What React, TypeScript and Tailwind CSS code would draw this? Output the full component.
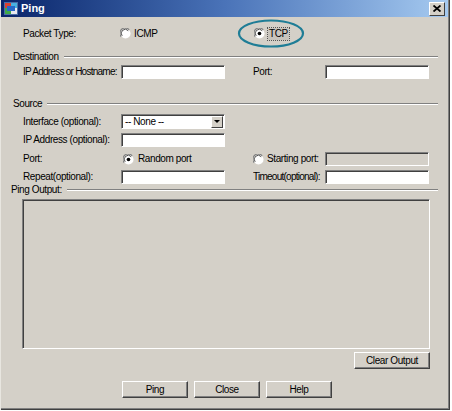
import React from "react";

const font = { fontFamily: '"Liberation Sans", Arial, sans-serif' };
const txt = "text-[10px] tracking-[-0.4px] whitespace-nowrap text-black leading-none";

function Radio({ checked }: { checked?: boolean }) {
  return (
    <svg width="11" height="11" viewBox="0 0 12 12" className="shrink-0">
      <circle cx="6" cy="6" r="5.5" fill="#ffffff" />
      <path d="M10 2 A5.5 5.5 0 0 0 1.2 9.5" fill="none" stroke="#808080" strokeWidth="1.2" />
      <path d="M9 3 A4.2 4.2 0 0 0 2.4 8.6" fill="none" stroke="#404040" strokeWidth="1" />
      {checked && <circle cx="6" cy="6" r="2" fill="#000000" />}
    </svg>
  );
}

function Input({ disabled }: { disabled?: boolean }) {
  return (
    <div
      className={
        "w-[104px] h-[14px] shrink-0 border border-t-[#808080] border-l-[#808080] border-b-white border-r-white shadow-[inset_1px_1px_0_#404040] " +
        (disabled ? "bg-[#d4d0c8]" : "bg-white")
      }
    />
  );
}

function Button({ label, w }: { label: string; w: string }) {
  return (
    <div
      className={
        w +
        " h-[17px] flex items-center justify-center bg-[#d4d0c8] border border-t-white border-l-white border-b-[#404040] border-r-[#404040] shadow-[inset_-1px_-1px_0_#808080] " +
        txt
      }
    >
      {label}
    </div>
  );
}

function GroupHeader({ label, pl }: { label: string; pl: string }) {
  return (
    <div className={"flex items-center h-[12px] pr-[12px] gap-[5px] " + pl}>
      <span className={txt}>{label}</span>
      <div className="flex-1 h-[2px] border-t border-t-[#808080] border-b border-b-white" />
    </div>
  );
}

function Label({ text, w, tight }: { text: string; w: string; tight?: boolean }) {
  return (
    <div className={w + " shrink-0 overflow-hidden " + txt + (tight ? " tracking-[-0.75px]" : "")}>
      {text}
    </div>
  );
}

export default function App() {
  return (
    <div className="w-[452px] h-[411px] bg-white" style={font}>
      <div className="relative w-[450px] h-[410px] bg-[#d4d0c8] border-l border-l-[#e8e6e0] shadow-[inset_-1px_-1px_0_#404040,inset_-2px_-2px_0_#808080] flex flex-col">
        {/* title bar */}
        <div className="h-[17px] mr-[2px] flex items-center bg-gradient-to-r from-[#0a246a] via-[#4a73b8] to-[#a6caf0] pl-[3px] pr-[3px]">
          <svg width="14" height="13" viewBox="0 0 14 13" className="shrink-0">
            <rect x="0" y="0" width="14" height="13" fill="#4a6ea8" />
            <rect x="1" y="1" width="6" height="5" fill="#d84030" />
            <rect x="7" y="1" width="6" height="5" fill="#48b0e0" />
            <rect x="1" y="6" width="6" height="6" fill="#40a848" />
            <rect x="7" y="6" width="6" height="6" fill="#e8e8f0" />
            <rect x="3" y="4" width="8" height="5" fill="#2868c8" />
          </svg>
          <span className="ml-[3px] text-[11px] font-bold text-white leading-none">Ping</span>
          <div className="ml-auto w-[16px] h-[14px] flex items-center justify-center bg-[#d4d0c8] border border-t-white border-l-white border-b-[#404040] border-r-[#404040]">
            <svg width="8" height="7" viewBox="0 0 8 7">
              <path d="M0.5 0.5 L7.5 6.5 M7.5 0.5 L0.5 6.5" stroke="#000" strokeWidth="1.8" />
            </svg>
          </div>
        </div>

        {/* packet type */}
        <div className="mt-[7px] h-[19px] flex items-center pl-[22px]">
          <Label text="Packet Type:" w="w-[97px]" />
          <div className="w-[134px] flex items-center gap-[3px]">
            <Radio />
            <span className={txt}>ICMP</span>
          </div>
          <div className="flex items-center gap-[3px]">
            <Radio checked />
            <span className={txt + " px-[1px] py-[1px] bg-[#c8c4bc] outline outline-1 outline-dotted outline-[#555]"}>TCP</span>
          </div>
        </div>

        {/* destination */}
        <div className="mt-[8px]">
          <GroupHeader label="Destination" pl="pl-[12px]" />
        </div>
        <div className="mt-[2px] h-[14px] flex items-center pl-[22px]">
          <Label text="IP Address or Hostname:" w="w-[98px]" tight />
          <Input />
          <div className="w-[28px] shrink-0" />
          <Label text="Port:" w="w-[72px]" />
          <Input />
        </div>

        {/* source */}
        <div className="mt-[19px]">
          <GroupHeader label="Source" pl="pl-[12px]" />
        </div>
        <div className="mt-[4px] h-[15px] flex items-center pl-[22px]">
          <Label text="Interface (optional):" w="w-[98px]" />
          <div className="w-[104px] h-[15px] flex items-center bg-white border border-t-[#808080] border-l-[#808080] border-b-white border-r-white shadow-[inset_1px_1px_0_#404040]">
            <span className={"flex-1 pl-[3px] " + txt}>-- None --</span>
            <div className="w-[12px] h-[12px] mr-[1px] flex items-center justify-center bg-[#d4d0c8] border border-t-white border-l-white border-b-[#404040] border-r-[#404040]">
              <svg width="6" height="4" viewBox="0 0 6 4">
                <path d="M0 0 L6 0 L3 3 Z" fill="#000" />
              </svg>
            </div>
          </div>
        </div>
        <div className="mt-[4px] h-[14px] flex items-center pl-[22px]">
          <Label text="IP Address (optional):" w="w-[98px]" />
          <Input />
        </div>
        <div className="mt-[5px] h-[14px] flex items-center pl-[22px]">
          <Label text="Port:" w="w-[98px]" />
          <div className="w-[132px] shrink-0 flex items-center gap-[4px] pl-[2px]">
            <Radio checked />
            <span className={txt}>Random port</span>
          </div>
          <div className="w-[72px] shrink-0 flex items-center gap-[3px]">
            <Radio />
            <span className={txt}>Starting port:</span>
          </div>
          <Input disabled />
        </div>
        <div className="mt-[4px] h-[14px] flex items-center pl-[22px]">
          <Label text="Repeat(optional):" w="w-[98px]" />
          <Input />
          <div className="w-[28px] shrink-0" />
          <Label text="Timeout(optional):" w="w-[72px]" tight />
          <Input />
        </div>

        {/* ping output */}
        <GroupHeader label="Ping Output:" pl="pl-[10px]" />
        <div className="mt-[3px] ml-[21px] w-[408px] h-[150px] border border-t-[#808080] border-l-[#808080] border-b-white border-r-white shadow-[inset_1px_1px_0_#404040] bg-[#d4d0c8]" />
        <div className="mt-[3px] flex pl-[353px]">
          <Button label="Clear Output" w="w-[76px]" />
        </div>
        <div className="mt-[12px] flex pl-[121px] gap-[6px]">
          <Button label="Ping" w="w-[66px]" />
          <Button label="Close" w="w-[66px]" />
          <Button label="Help" w="w-[66px]" />
        </div>

        {/* annotation ellipse around TCP */}
        <svg className="absolute left-[236px] top-[19px]" width="70" height="30" viewBox="0 0 70 30">
          <ellipse cx="34" cy="14.5" rx="32" ry="13" fill="none" stroke="#1f7d96" strokeWidth="2.2" />
        </svg>
      </div>
    </div>
  );
}
